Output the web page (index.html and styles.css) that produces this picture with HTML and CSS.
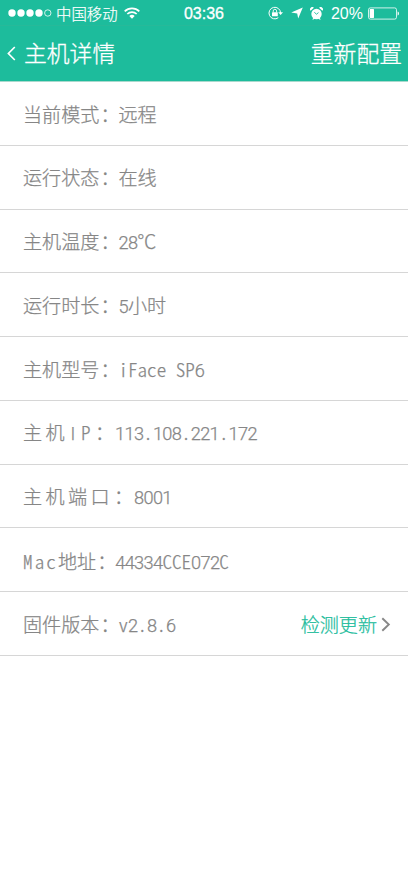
FILE: index.html
```html
<!DOCTYPE html>
<html lang="zh-CN">
<head>
  <meta charset="UTF-8" />
  <meta name="viewport" content="width=device-width, initial-scale=1.0" />
  <title>主机详情</title>
  <link rel="stylesheet" href="styles.css">
</head>
<body>
  <header class="header">
    <!-- Phone status bar -->
    <div class="status-bar">
      <div class="status-left">
        <svg class="signal" width="44" height="8" viewBox="0 0 44 8">
          <g fill="#fff">
            <circle cx="4" cy="4" r="3.7" />
            <circle cx="13" cy="4" r="3.7" />
            <circle cx="22" cy="4" r="3.7" />
            <circle cx="31" cy="4" r="3.7" />
          </g>
          <circle cx="39.8" cy="4" r="3.2" fill="none" stroke="#fff" stroke-width="0.8" />
        </svg>
        <span class="carrier">中国移动</span>
        <svg class="wifi" width="16" height="12" viewBox="0 0 16 12">
          <g fill="none" stroke="#fff" stroke-width="1.7">
            <path d="M0.7 4.4a10.4 10.4 0 0 1 14.6 0" />
            <path d="M3.3 7a6.7 6.7 0 0 1 9.4 0" />
          </g>
          <path d="M8 11.8L5.3 9a3.9 3.9 0 0 1 5.4 0z" fill="#fff" />
        </svg>
      </div>
      <div class="time">03:36</div>
      <div class="status-right">
        <svg class="lock" width="15" height="14" viewBox="0 0 15 14">
          <path d="M12.6 7A5.8 5.8 0 1 0 10.3 11.7" fill="none" stroke="#fff" stroke-width="1" />
          <path d="M10.2 6.3h4.8l-2.4 2.8z" fill="#fff" />
          <rect x="4" y="6.3" width="5.8" height="4" rx="0.4" fill="#fff" />
          <path d="M5.2 6.5V5a1.7 1.7 0 0 1 3.4 0v1.5" fill="none" stroke="#fff" stroke-width="0.9" />
        </svg>
        <svg class="location" width="12" height="12" viewBox="0 0 12 12">
          <path d="M11.8 0.4L7.2 11.6 6.2 6.4 0.2 5.6z" fill="#fff" />
        </svg>
        <svg class="alarm" width="13" height="13" viewBox="0 0 13 13">
          <circle cx="6.5" cy="7" r="5.2" fill="#fff" />
          <path d="M0.6 3.8a2.2 2.2 0 0 1 3.3-3zM12.4 3.8a2.2 2.2 0 0 0-3.3-3zM2.2 12.6l1.5-2 1.2.8-1.4 1.2zM10.8 12.6l-1.5-2-1.2.8 1.4 1.2z" fill="#fff" />
          <path d="M4.3 5.3l2.2 1.9 2-1.6" fill="none" stroke="#1dbc9c" stroke-width="0.9" />
        </svg>
        <span class="percent">20%</span>
        <svg class="battery" width="32" height="13" viewBox="0 0 32 13">
          <rect x="0.5" y="0.9" width="28" height="11.2" rx="1.8" fill="none" stroke="#fff" stroke-width="0.8" />
          <rect x="1.7" y="2.1" width="4.3" height="8.8" rx="0.6" fill="#fff" />
          <path d="M29.6 4.5c1.8.4 1.8 3.6 0 4z" fill="#fff" />
        </svg>
      </div>
    </div>
    <!-- Title bar -->
    <div class="nav-bar">
      <div class="nav-title">
        <svg class="back" width="9" height="15" viewBox="0 0 9 15">
          <path d="M7.8 1L1.4 7.5l6.4 6.5" fill="none" stroke="#fff" stroke-width="1.7" />
        </svg>
        <span>主机详情</span>
      </div>
      <span class="nav-action">重新配置</span>
    </div>
  </header>

  <!-- Host details -->
  <ul class="list">
    <li class="row row-low"><span>当前模式<i class="colon">：</i></span><span>远程</span></li>
    <li class="row"><span>运行状态<i class="colon">：</i></span><span>在线</span></li>
    <li class="row"><span>主机温度<i class="colon">：</i></span><span><b class="num">28</b>℃</span></li>
    <li class="row"><span>运行时长<i class="colon">：</i></span><span><b class="num">5</b>小时</span></li>
    <li class="row row-low"><span>主机型号<i class="colon">：</i></span><span>iFace SP<b class="num">6</b></span></li>
    <li class="row"><span><span class="wide">主机<b class="bar">I</b>P</span><i class="colon">：</i></span><span class="far"><b class="num">113</b>.<b class="num">108</b>.<b class="num">221</b>.<b class="num">172</b></span></li>
    <li class="row"><span><span class="wide">主机端口</span><i class="colon">：</i></span><span class="far"><b class="num">8001</b></span></li>
    <li class="row row-low"><span><span class="mac">Mac</span>地址<i class="colon">：</i></span><span><b class="num">44334</b>CCE<b class="num">072</b>C</span></li>
    <li class="row row-low">
      <span>固件版本<i class="colon">：</i></span><span>v<b class="num">2</b>.<b class="num">8</b>.<b class="num">6</b></span>
      <span class="update">检测更新
        <svg width="10" height="15" viewBox="0 0 10 15">
          <path d="M1.3 1.2l6.5 6.3-6.5 6.3" fill="none" stroke="#888" stroke-width="1.9" />
        </svg>
      </span>
    </li>
  </ul>
</body>
</html>
```
FILE: styles.css
```css
* {
  margin: 0;
  padding: 0;
  box-sizing: border-box;
}
body {
  min-height: 100vh;
  background: #fff;
  color: #868686;
  font-family: "Noto Sans CJK SC", sans-serif;
  font-weight: 300;
}
svg {
  display: block;
  flex: none;
}
/* Header */
.header {
  height: 82px;
  background: #1dbc9c;
  border-bottom: 1px solid #a9d9cd;
  color: #fff;
}
.status-bar {
  display: grid;
  grid-template-columns: 1fr auto 1fr;
  align-items: center;
  height: 26px;
  padding: 0 8px;
  border-bottom: 1px solid #27b999;
  font-size: 15px;
  line-height: 24px;
}
.status-left,
.status-right {
  display: flex;
  align-items: center;
}
.status-right {
  justify-content: flex-end;
}
.carrier {
  margin-left: 4px;
  font-size: 15.4px;
  -webkit-text-stroke: 0.2px #fff;
}
.wifi {
  margin-left: 6px;
}
.time {
  padding-top: 2px;
  font-family: "Liberation Sans", sans-serif;
  font-size: 16px;
  font-weight: 400;
  -webkit-text-stroke: 0.3px #fff;
}
.location {
  margin-left: 8px;
}
.alarm {
  margin-left: 7px;
}
.percent {
  margin-left: 8px;
  padding-top: 2px;
  font-family: "Liberation Sans", sans-serif;
  font-size: 16px;
}
.battery {
  margin-left: 5px;
}
.nav-bar {
  display: flex;
  align-items: center;
  justify-content: space-between;
  height: 54px;
  padding: 0 6px 0 7px;
  font-size: 22.8px;
  line-height: 54px;
  -webkit-text-stroke: 0.3px #fff;
}
.nav-title {
  display: flex;
  align-items: center;
}
.nav-title span {
  margin-left: 8px;
}
/* Detail rows, latin text is half the width of a hanzi */
.list {
  list-style: none;
}
.row {
  display: flex;
  align-items: center;
  height: 63.75px;
  padding: 0 17px 0 23px;
  border-bottom: 1px solid #d6d6d6;
  font-size: 19.1px;
  line-height: 28px;
  white-space: pre;
  font-feature-settings: "hwid";
  -webkit-text-stroke: 0.25px currentColor;
}
.row-low {
  padding-top: 2px;
}
.colon {
  padding-left: 1px;
  font-style: normal;
  letter-spacing: -1px;
}
.num {
  font-family: Roboto, sans-serif;
  font-size: 18.2px;
  font-weight: 300;
  line-height: 1;
  letter-spacing: -0.66px;
  vertical-align: 0.5px;
}
.bar {
  display: inline-block;
  width: 13px;
  font-family: Roboto, sans-serif;
  font-size: 18px;
  font-weight: 300;
  line-height: 1;
  text-align: center;
}
.wide {
  letter-spacing: 3.4px;
}
.mac {
  letter-spacing: 2.1px;
}
.far {
  margin-left: 2px;
}
.update {
  display: flex;
  align-items: center;
  gap: 4px;
  margin-left: auto;
  color: #1dbc9c;
  white-space: normal;
}
```
